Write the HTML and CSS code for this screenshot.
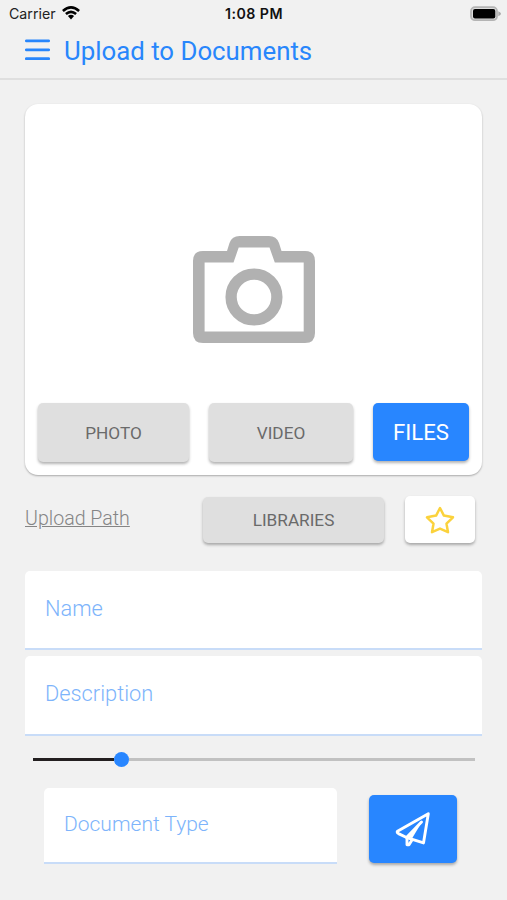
FILE: index.html
```html
<!DOCTYPE html>
<html lang="en">
<head>
<meta charset="utf-8">
<title>Upload to Documents</title>
<link rel="stylesheet" href="styles.css">
</head>
<body>
<div class="status">
  <div class="carrier"><span>Carrier</span>
    <svg width="18" height="14" viewBox="0 0 18 14"><g fill="none" stroke="#000" stroke-width="2.6"><path d="M.9 4.9Q9-2.1 17.1 4.9"/><path d="M3.9 8.1Q9 3.7 14.1 8.1"/></g><path d="M5.9 10.1Q9 7.600 12.100 10.100L9 13.400Z"/></svg>
  </div>
  <span class="time">1:08 PM</span>
  <svg class="battery" width="32" height="16" viewBox="0 0 32 16"><rect x="1" y="1.200" width="26" height="13" rx="4" fill="#ddd" stroke="#b4b4b4" stroke-width="1.800"/><rect x="3" y="3" width="22.300" height="9.500" rx="2"/><path d="M28.300 5.200Q31 6.300 31 7.700T28.300 10.200Z" fill="#a8a8a8"/></svg>
</div>
<header class="header">
  <svg width="25" height="22" viewBox="0 0 25 22"><path d="M1.300 1.900H23.700M1.300 10.800H23.700M1.300 19.700H23.700" stroke="#2886fc" stroke-width="2.700" stroke-linecap="round"/></svg>
  <h1>Upload to Documents</h1>
</header>
<main>
  <section class="card">
    <div class="preview">
      <svg width="124" height="109" viewBox="192 235 124 109"><g fill="none" stroke="#b1b1b1" stroke-width="11.300" stroke-linejoin="miter"><path fill="#b1b1b1" fill-rule="evenodd" stroke="none" d="M203 251H227L229.500 243Q232 236 239.500 236H269Q276.500 236 279 243L281.500 251H305Q315 251 315 261V333Q315 343 305 343H203Q193 343 193 333V261Q193 251 203 251ZM238.700 247.500L233.500 262.600H204.600V331.600H303.700V262.600H274.800L269.500 247.500Z"/><circle cx="254" cy="297" r="22.900"/></g></svg>
    </div>
    <div class="sources">
      <button class="btn photo">PHOTO</button>
      <button class="btn video">VIDEO</button>
      <button class="btn files">FILES</button>
    </div>
  </section>
  <section class="path">
    <a class="link">Upload Path</a>
    <button class="btn libraries">LIBRARIES</button>
    <button class="btn star"><svg width="30" height="28" viewBox="0 0 30 28"><path d="M15 2L18.900 9.600L28 11.300L21.500 17.700L23 26.200L15 22.600L7 26.200L8.500 17.700L2 11.300L11.100 9.600Z" fill="none" stroke="#fbd23c" stroke-width="2.500" stroke-linejoin="round"/></svg></button>
  </section>
  <div class="field name"><span>Name</span></div>
  <div class="field description"><span>Description</span></div>
  <div class="slider"><i class="filled"></i><i class="thumb"></i><i class="rest"></i></div>
  <section class="submit">
    <div class="field type"><span>Document Type</span></div>
    <button class="btn send"><svg width="38" height="38" viewBox="394 810 38 38"><g fill="none" stroke="#fff" stroke-width="2.900" stroke-linejoin="round" stroke-linecap="round"><path d="M428.300 813.700L397.500 831.200Q396.500 832.500 398.500 833.600L406 837.300L423.500 842.900Z"/><path d="M421.500 822L407 837V844.800H409L412 840"/></g><path d="M422.500 821L412.300 838L407 837.500Z" fill="#fff"/></svg></button>
  </section>
</main>
</body>
</html>
```
FILE: styles.css
```css
* { box-sizing: border-box; }
body {
  margin: 0;
  height: 900px;
  overflow: hidden;
  background: #f1f1f1;
  font-family: Roboto, "Liberation Sans", sans-serif;
}
svg { display: block; flex: none; }
.status {
  height: 28px;
  padding: 0 5px 0 9px;
  display: grid;
  grid-template-columns: 1fr auto 1fr;
  align-items: center;
  font: 15px/28px Inter, "Liberation Sans", sans-serif;
  color: #222;
}
.carrier { display: flex; align-items: center; gap: 6px; }
.carrier span { font-size: 14.2px; }
.carrier svg { margin-top: -2px; }
.time { font-size: 14.2px; font-weight: 600; letter-spacing: .45px; color: #111; margin-right: 3px; }
.battery { justify-self: end; margin-top: -1px; }
.header {
  height: 52px;
  padding: 0 25px 6px;
  display: flex;
  align-items: center;
  gap: 14px;
  border-bottom: 2px solid #dfdfdf;
}
h1 { margin: 1px 0 -1px; font-size: 25.8px; font-weight: 400; line-height: 32px; color: #2886fc; white-space: nowrap; }
main { padding: 24px 25px 0; }
.card {
  height: 371px;
  background: #fff;
  border-radius: 13px;
  box-shadow: 0 1px 2px rgba(0, 0, 0, .3);
}
.preview { height: 299px; padding: 131px 0 0 167px; }
.sources { display: flex; align-items: flex-start; padding: 0 13px; gap: 20px; }
.btn {
  height: 59px;
  padding: 0;
  border: 0;
  border-radius: 5px;
  display: flex;
  align-items: center;
  justify-content: center;
  background: #dfdfdf;
  color: #6a6a6a;
  font: 17.2px Roboto, sans-serif;
  box-shadow: 0 2px 3px rgba(0, 0, 0, .3);
}
.photo { width: 151px; }
.video { width: 144px; }
.files { width: 96px; height: 58px; background: #2886ff; color: #fff; font-size: 22.2px; }
.path { display: flex; align-items: center; height: 47px; margin-top: 21px; }
.link { width: 178px; margin-top: -2px; color: #858585; font-size: 19.6px; font-weight: 300; text-decoration: underline; }
.libraries { width: 181px; height: 46px; margin-right: 21px; }
.star { width: 70px; height: 47px; background: #fff; }
.field {
  width: 457px;
  height: 79px;
  padding: 0 20px 3px;
  display: flex;
  align-items: center;
  background: #fff;
  border-radius: 5px 5px 0 0;
  border-bottom: 2px solid #c8dcf8;
  color: #7db4fb;
  font-size: 21.8px;
  font-weight: 300;
}
.name { margin-top: 28px; }
.description { margin-top: 6px; height: 80px; }
.slider { display: flex; align-items: center; height: 16px; margin: 15px 7px 0 8px; }
.filled { width: 81px; height: 3px; background: #231f20; }
.thumb { width: 15px; height: 15px; border-radius: 50%; background: #2886ff; }
.rest { flex: 1; height: 3px; background: #c1c1c1; }
.submit { display: flex; align-items: flex-start; margin: 21px 0 0 19px; }
.type { width: 293px; height: 76px; font-size: 21px; }
.send { width: 88px; height: 68px; margin: 7px 0 0 32px; background: #2886ff; }
```
